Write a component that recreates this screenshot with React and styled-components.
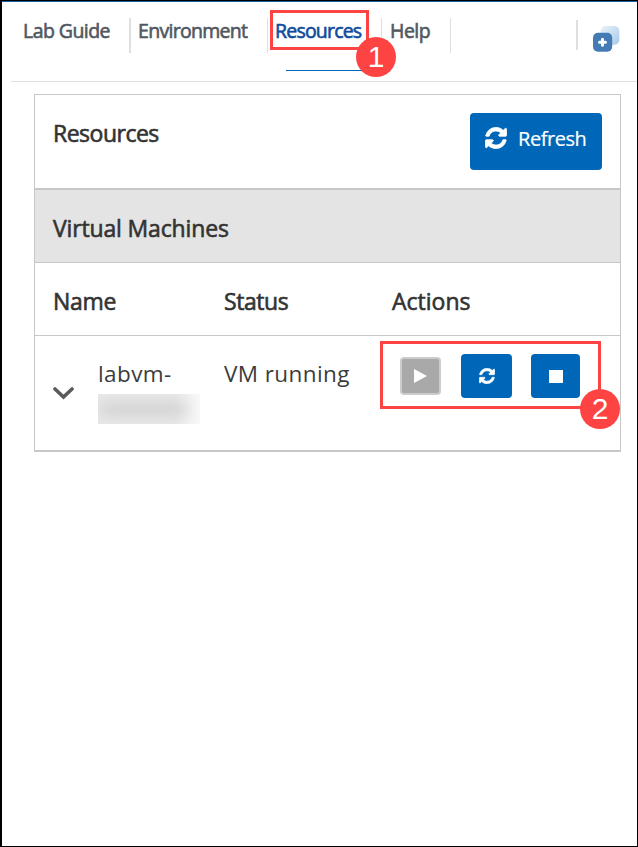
import React from "react";
import styled, { createGlobalStyle } from "styled-components";

const GlobalStyle = createGlobalStyle`
  *, *::before, *::after { box-sizing: border-box; }
  body { margin: 0; background: #fff; }
  button { font: inherit; margin: 0; padding: 0; border: 0; }
`;

const BLUE = "#0067b8";
const RED = "#fe4343";
const LINE = "#c8c6c6";

const Window = styled.div`
  width: 638px;
  height: 847px;
  background: #fff;
  border: solid #000;
  border-width: 1px 1px 1px 2px;
  font-family: "Open Sans", "Noto Sans", sans-serif;
  color: #333;
`;

const TopBar = styled.header`
  display: flex;
  height: 81px;
  margin-left: 9px;
  border-bottom: 1px solid #dfe0e0;
  position: relative;

  &::before {
    content: "";
    position: absolute;
    top: 0;
    left: -9px;
    right: 0;
    height: 1px;
    background: #1560a8;
  }
`;

const Tab = styled.div`
  position: relative;
  width: ${(p) => p.$width}px;
  height: 35px;
  margin-top: 17px;
  padding-left: ${(p) => p.$pad}px;
  border-right: ${(p) => p.$rule || 1}px solid #dce0e5;
  color: ${(p) => (p.$active ? "#0f4c9c" : "#505861")};
  font-size: 19.5px;
  font-weight: 500;
  line-height: 25px;
  letter-spacing: ${(p) => p.$track}px;
  -webkit-text-stroke: 0.6px currentColor;
  white-space: nowrap;
`;

const ActiveLine = styled.span`
  position: absolute;
  left: 18px;
  top: 52px;
  width: 80px;
  height: 1px;
  background: ${BLUE};
`;

const Outline = styled.div`
  position: absolute;
  left: ${(p) => p.$x}px;
  top: ${(p) => p.$y}px;
  width: ${(p) => p.$w}px;
  height: ${(p) => p.$h}px;
  border: 3px solid ${RED};
  pointer-events: none;
`;

const Badge = styled.span`
  position: absolute;
  z-index: 2;
  right: ${(p) => p.$right}px;
  bottom: ${(p) => p.$bottom}px;
  width: 40px;
  height: 40px;
  border-radius: 50%;
  background: ${RED};
  color: #fff;
  font: 400 30px/40px "Liberation Sans", Arial, sans-serif;
  letter-spacing: 0;
  text-align: center;
  -webkit-text-stroke: 0;
`;

const Tools = styled.div`
  display: flex;
  height: 30px;
  margin: 19px 17px 0 auto;
  padding: 5px 0 0 15px;
  border-left: 2px solid #dcdfe3;
`;

const Card = styled.section`
  width: 587px;
  margin: 12px 0 0 32px;
  border: 1px solid ${LINE};
  border-bottom-width: 2px;
`;

const CardHeader = styled.div`
  display: flex;
  justify-content: space-between;
  height: 95px;
  padding: 18px 18px 0 18px;
  border-bottom: 2px solid ${LINE};
`;

const Heading = styled.h2`
  margin: 0;
  font-size: 23px;
  font-weight: 500;
  line-height: 32px;
  letter-spacing: ${(p) => p.$track}px;
  -webkit-text-stroke: 0.6px currentColor;
  white-space: nowrap;
`;

const CardTitle = styled(Heading)`
  margin-top: 4px;
`;

const Section = styled.div`
  height: 73px;
  padding: 22px 0 0 18px;
  background: #e4e4e4;
  border-bottom: 1px solid ${LINE};
`;

const Row = styled.div`
  display: grid;
  grid-template-columns: 171px 168px 1fr;
  height: ${(p) => p.$height}px;
  padding: ${(p) => p.$top}px 0 0 18px;
  border-bottom: ${(p) => (p.$last ? "0" : `1px solid ${LINE}`)};
  position: relative;
`;

const NameCell = styled.div`
  display: grid;
  grid-template-columns: 45px 1fr;
`;

const ChevronBox = styled.div`
  padding-top: 27px;
`;

const Value = styled.div`
  padding-top: 2px;
  font-size: 22.5px;
  font-weight: 400;
  line-height: 32px;
  color: #3c3c3c;
  letter-spacing: ${(p) => p.$track}px;
  white-space: nowrap;
`;

const Redacted = styled.div`
  width: 102px;
  height: 30px;
  margin-top: 4px;
  overflow: hidden;
  background: linear-gradient(90deg, #e9e9e9 0 75%, #f9f9f9);

  &::before {
    content: "";
    display: block;
    width: 86px;
    height: 14px;
    margin: 8px 0 0 2px;
    background: #d2d2d2;
    filter: blur(7px);
  }
`;

const RedactedWrap = styled.div`
  display: flow-root;
`;

const Actions = styled.div`
  display: flex;
  align-items: center;
  height: 44px;
  margin: -2px 0 0 8px;
`;

const IconButton = styled.button`
  display: flex;
  align-items: center;
  justify-content: center;
  width: ${(p) => p.$width}px;
  height: 44px;
  margin-right: ${(p) => p.$gap || 0}px;
  border-radius: 4px;
  background: ${BLUE};
  color: #fff;

  &:disabled {
    height: 38px;
    border: 2px solid #ccc;
    background: #a9a9a9;
  }
`;

const RefreshButton = styled.button`
  display: flex;
  width: 132px;
  height: 57px;
  padding: 14px 0 0 15px;
  border-radius: 4px;
  background: ${BLUE};
  color: #fff;
  font-size: 20px;
  line-height: 24px;
  letter-spacing: -0.45px;
  -webkit-text-stroke: 0.2px currentColor;
`;

const RefreshLabel = styled.span`
  margin-left: 11px;
`;

function RefreshIcon({ size }) {
  return (
    <svg width={size} height={size} viewBox="-30 -30 1596 1596" fill="currentColor" stroke="currentColor" strokeWidth="60">
      <path d="M1511 928q0 5-1 7-64 268-268 434.5t-478 166.5q-146 0-282.5-55t-243.5-157l-129 129q-19 19-45 19t-45-19-19-45v-448q0-26 19-45t45-19h448q26 0 45 19t19 45-19 45l-137 137q71 66 161 102t187 36q134 0 250-65t186-179q11-17 53-117 8-23 30-23h192q13 0 22.5 9.5t9.5 22.5zm25-800v448q0 26-19 45t-45 19h-448q-26 0-45-19t-19-45 19-45l138-138q-148-137-349-137-134 0-250 65t-186 179q-11 17-53 117-8 23-30 23h-199q-13 0-22.5-9.5t-9.5-22.5v-7q65-268 270-434.5t480-166.5q146 0 284 55.5t245 156.5l130-129q19-19 45-19t45 19 19 45z" />
    </svg>
  );
}

function AddWindowIcon() {
  return (
    <svg width="27" height="27" viewBox="0 0 27 27">
      <defs>
        <linearGradient id="pane" x1="0" y1="0" x2="1" y2="1">
          <stop offset="0.1" stopColor="#e3eef8" />
          <stop offset="1" stopColor="#a6cae9" />
        </linearGradient>
      </defs>
      <rect x="7.5" y="1" width="18.8" height="18.8" rx="5" fill="url(#pane)" />
      <rect x="0" y="7.8" width="19.2" height="19" rx="5" fill="#457bb5" />
      <path d="M9.5 14.2v6M6.5 17.2h6" stroke="#fff" strokeWidth="3" strokeLinecap="round" />
    </svg>
  );
}

export default function App() {
  return (
    <>
      <GlobalStyle />
      <Window>
        <TopBar>
          <Tab $width={120} $pad={12} $rule={2} $track={-0.55}>Lab Guide</Tab>
          <Tab $width={137} $pad={7} $track={-0.7}>Environment</Tab>
          <Tab $width={114} $pad={7} $track={-0.8} $active>
            Resources
            <ActiveLine />
            <Outline $x={2} $y={-8} $w={99} $h={40} />
            <Badge $right={-15} $bottom={-24}>1</Badge>
          </Tab>
          <Tab $width={69} $pad={8} $track={-0.5}>Help</Tab>
          <Tools><AddWindowIcon /></Tools>
        </TopBar>

        <Card>
          <CardHeader>
            <CardTitle $track={-0.5}>Resources</CardTitle>
            <RefreshButton>
              <RefreshIcon size={22} />
              <RefreshLabel>Refresh</RefreshLabel>
            </RefreshButton>
          </CardHeader>
          <Section>
            <Heading $track={-0.15}>Virtual Machines</Heading>
          </Section>
          <Row $height={73} $top={22}>
            <Heading $track={-0.3}>Name</Heading>
            <Heading $track={-0.45}>Status</Heading>
            <Heading $track={0}>Actions</Heading>
          </Row>
          <Row $height={114} $top={20} $last>
            <NameCell>
              <ChevronBox>
                <svg width="21" height="13" viewBox="0 0 21 13" fill="none" stroke="#5b5b5b" strokeWidth="3.6">
                  <path d="M2 2 10.5 10 19 2" strokeLinecap="round" />
                </svg>
              </ChevronBox>
              <div>
                <Value $track={0.4}>labvm-</Value>
                <RedactedWrap><Redacted /></RedactedWrap>
              </div>
            </NameCell>
            <Value $track={0.4}>VM running</Value>
            <Actions>
              <IconButton $width={41} $gap={20} disabled>
                <svg width="13" height="14" viewBox="0 0 13 14" fill="#fff"><path d="M0 0 13 7 0 14z" /></svg>
              </IconButton>
              <IconButton $width={51} $gap={19}><RefreshIcon size={16} /></IconButton>
              <IconButton $width={49}>
                <svg width="14" height="13" viewBox="0 0 14 13" fill="#fff"><rect width="14" height="13" /></svg>
              </IconButton>
            </Actions>
            <Outline $x={345} $y={5} $w={221} $h={68} />
            <Badge $right={0} $bottom={21}>2</Badge>
          </Row>
        </Card>
      </Window>
    </>
  );
}
